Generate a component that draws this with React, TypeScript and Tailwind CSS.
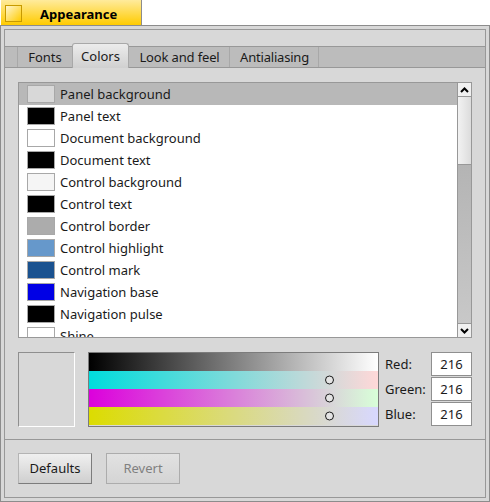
const rows = [
  ["Panel background", "bg-[#d8d8d8]"],
  ["Panel text", "bg-black"],
  ["Document background", "bg-white"],
  ["Document text", "bg-black"],
  ["Control background", "bg-[#f5f5f5]"],
  ["Control text", "bg-black"],
  ["Control border", "bg-[#acacac]"],
  ["Control highlight", "bg-[#6698cb]"],
  ["Control mark", "bg-[#1a5290]"],
  ["Navigation base", "bg-[#0000e5]"],
  ["Navigation pulse", "bg-black"],
  ["Shine", "bg-white"],
];

function Tab({ label, className }: { label: string; className: string }) {
  return (
    <div className={"flex h-full items-center justify-center border-r border-[#a8a8a8] " + className}>
      {label}
    </div>
  );
}

function Knob() {
  return (
    <div className="absolute left-[236px] top-1/2 h-[9px] w-[9px] -translate-y-1/2 rounded-full border border-[#1a1a1a] bg-[#e4e4e4]" />
  );
}

function Channel({ label, gradient }: { label: string; gradient: string }) {
  return (
    <div className={"relative h-[18px] " + gradient} aria-label={label}>
      <Knob />
    </div>
  );
}

function ValueField({ label }: { label: string }) {
  return (
    <div className="flex h-[24px] items-center justify-between">
      <span>{label}</span>
      <div className="flex h-[24px] w-[41px] items-center justify-center border border-[#8f8f8f] bg-white">216</div>
    </div>
  );
}

export default function App() {
  return (
    <div className="flex h-[502px] w-[490px] flex-col overflow-hidden bg-white font-['Noto_Sans',sans-serif] text-[13px] leading-none text-[#1a1a1a]">
      {/* title tab */}
      <div className="ml-px flex h-[25px] w-[141px] items-center border-r border-[#8c8c8c] bg-linear-to-b/srgb from-[#ffeb9c] to-[#ffcb00] pl-[4px] pt-[3px]">
        <div className="mb-px h-[17px] w-[17px] border border-[#c79a00] bg-linear-to-br/srgb from-[#fff6d0] to-[#ffcb00]" />
        <span className="ml-[18px] text-[13px] font-bold text-black">Appearance</span>
      </div>

      {/* window frame */}
      <div className="flex min-h-0 flex-1 border border-[#8c8c8c] bg-[#d8d8d8] p-[3px]">
        <div className="flex min-w-0 flex-1 flex-col border border-[#989898]">
          <div className="h-[17px] border-b border-[#989898]" />

          <div className="flex h-[21px] border-b border-[#989898] bg-[#bcbcbc] pl-[12px]">
            <Tab label="Fonts" className="w-[56px] border-l border-l-[#a8a8a8]" />
            <div className="-ml-px h-[21px] w-[57px]">
              <div className="-mt-[4px] flex h-[25px] items-center justify-center rounded-t-[3px] border border-b-0 border-[#a8a8a8] bg-linear-to-b/srgb from-[#ececec] to-[#d0d0d0]">
                Colors
              </div>
            </div>
            <Tab label="Look and feel" className="w-[101px] pl-px tracking-[-0.15px]" />
            <Tab label="Antialiasing" className="w-[89px] pl-px tracking-[-0.2px]" />
          </div>

          <div className="flex min-h-0 flex-1 flex-col px-[13px] pt-[14px]">
            {/* colour list */}
            <div className="flex h-[256px] border border-[#989898] bg-white">
              <div className="min-w-0 flex-1 overflow-hidden">
                {rows.map(([name, swatch], i) => (
                  <div
                    key={name}
                    className={"flex h-[22px] flex-none items-center pl-[8px] " + (i === 0 ? "bg-[#b8b8b8]" : "")}
                  >
                    <div className={"h-[18px] w-[28px] border border-[#a8a8a8] " + swatch} />
                    <span className="ml-[5px]">{name}</span>
                  </div>
                ))}
              </div>

              {/* scroll bar */}
              <div className="flex w-[14px] flex-col border-l border-[#989898] bg-[#c0c0c0]">
                <div className="flex h-[14px] items-center justify-center border-b border-[#989898] bg-[#f0f0f0]">
                  <svg width="9" height="6" viewBox="0 0 9 6">
                    <path d="M1 5 L4.5 1.5 L8 5" fill="none" stroke="#000" strokeWidth="2" />
                  </svg>
                </div>
                <div className="h-[68px] border-b border-[#989898] bg-linear-to-r/srgb from-[#f2f2f2] to-[#dcdcdc]" />
                <div className="flex-1 bg-linear-to-b/srgb from-[#b4b4b4] to-[#c8c8c8]" />
                <div className="flex h-[14px] items-center justify-center border-t border-[#989898] bg-[#f0f0f0]">
                  <svg width="9" height="6" viewBox="0 0 9 6">
                    <path d="M1 1 L4.5 4.5 L8 1" fill="none" stroke="#000" strokeWidth="2" />
                  </svg>
                </div>
              </div>
            </div>

            {/* colour editor */}
            <div className="mt-[14px] flex h-[75px]">
              <div className="h-[75px] w-[57px] border border-[#8f8f8f] border-r-white border-b-white bg-[#d8d8d8]" />
              <div className="ml-[13px] flex h-[75px] w-[291px] flex-col border border-[#7c7c7c]">
                <div className="h-[18px] bg-linear-to-r/srgb from-black to-white" />
                <Channel label="Red" gradient="bg-linear-to-r/srgb from-[#00dcdc] to-[#ffd8d8]" />
                <Channel label="Green" gradient="bg-linear-to-r/srgb from-[#dc00dc] to-[#d8ffd8]" />
                <Channel label="Blue" gradient="bg-linear-to-r/srgb from-[#dcdc00] to-[#d8d8ff]" />
              </div>
              <div className="ml-[6px] flex flex-1 flex-col gap-px">
                <ValueField label="Red:" />
                <ValueField label="Green:" />
                <ValueField label="Blue:" />
              </div>
            </div>
          </div>

          {/* footer buttons */}
          <div className="flex h-[58px] gap-[14px] border-t border-[#989898] px-[13px] pt-[13px]">
            <button className="h-[31px] w-[74px] border border-[#7c7c7c] border-l-[#b4b4b4] border-t-[#b4b4b4] bg-linear-to-b/srgb from-[#f0f0f0] to-[#cfcfcf] text-[#1a1a1a]">
              Defaults
            </button>
            <button className="h-[31px] w-[74px] border border-[#acacac] bg-linear-to-b/srgb from-[#e2e2e2] to-[#d4d4d4] text-[#808080]">
              Revert
            </button>
          </div>
        </div>
      </div>
    </div>
  );
}
